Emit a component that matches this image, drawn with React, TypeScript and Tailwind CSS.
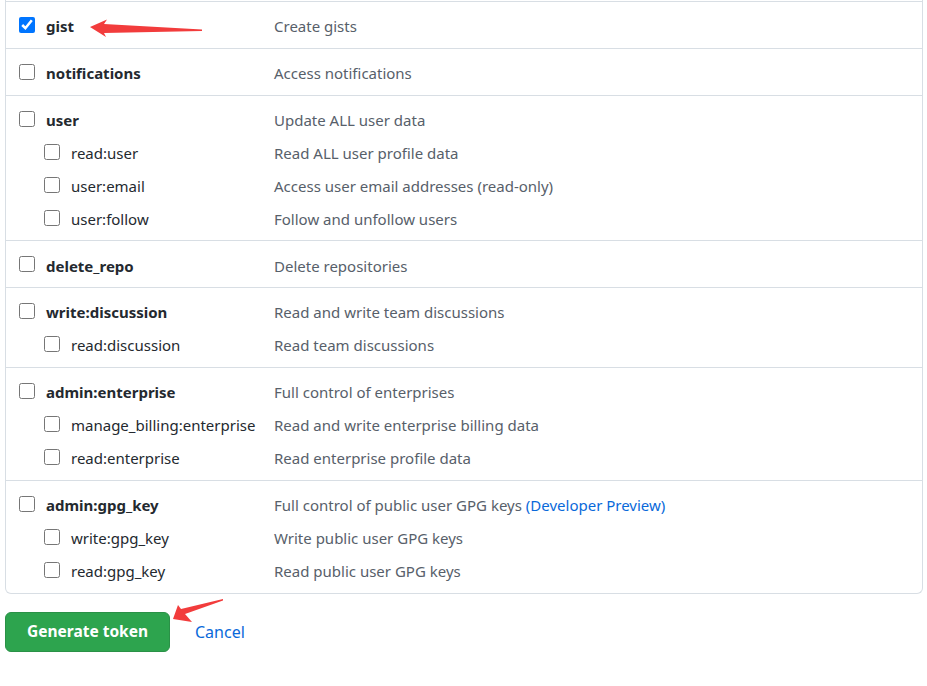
import React from "react";

interface Scope {
  name: string;
  desc: React.ReactNode;
  checked?: boolean;
}

interface ScopeGroup {
  main: Scope;
  subs?: Scope[];
}

const GROUPS: ScopeGroup[] = [
  { main: { name: "gist", desc: "Create gists", checked: true } },
  { main: { name: "notifications", desc: "Access notifications" } },
  {
    main: { name: "user", desc: "Update ALL user data" },
    subs: [
      { name: "read:user", desc: "Read ALL user profile data" },
      { name: "user:email", desc: "Access user email addresses (read-only)" },
      { name: "user:follow", desc: "Follow and unfollow users" },
    ],
  },
  { main: { name: "delete_repo", desc: "Delete repositories" } },
  {
    main: { name: "write:discussion", desc: "Read and write team discussions" },
    subs: [{ name: "read:discussion", desc: "Read team discussions" }],
  },
  {
    main: { name: "admin:enterprise", desc: "Full control of enterprises" },
    subs: [
      { name: "manage_billing:enterprise", desc: "Read and write enterprise billing data" },
      { name: "read:enterprise", desc: "Read enterprise profile data" },
    ],
  },
  {
    main: {
      name: "admin:gpg_key",
      desc: (
        <>
          Full control of public user GPG keys{" "}
          <a href="#" className="text-[#0969da]">
            (Developer Preview)
          </a>
        </>
      ),
    },
    subs: [
      { name: "write:gpg_key", desc: "Write public user GPG keys" },
      { name: "read:gpg_key", desc: "Read public user GPG keys" },
    ],
  },
];

function ScopeRow({ scope, sub }: { scope: Scope; sub?: boolean }) {
  return (
    <label className="flex h-[33px] items-center">
      <div className={`flex w-[255px] shrink-0 items-center ${sub ? "pl-[25px]" : ""}`}>
        <input
          type="checkbox"
          defaultChecked={scope.checked}
          className="m-0 mb-[3px] h-4 w-4 shrink-0"
        />
        <span
          className={`ml-[11px] whitespace-nowrap text-[#24292f] ${
            sub ? "font-normal" : "font-bold"
          }`}
        >
          {scope.name}
        </span>
      </div>
      <span className="whitespace-nowrap text-[#57606a]">{scope.desc}</span>
    </label>
  );
}

export default function App() {
  return (
    <div
      className="relative min-h-[686px] w-[927px] bg-white text-[15px]"
      style={{ fontFamily: '"Noto Sans", "Open Sans", sans-serif' }}
    >
      <div className="pl-[5px] pr-[4px]">
        <div className="rounded-b-md border-x border-b border-[#d8dee4]">
          <div className="h-px" />
          {GROUPS.map((g) => (
            <div key={g.main.name} className="border-t border-[#d8dee4] pb-[4.8px] pl-[13px] pt-2">
              <ScopeRow scope={g.main} />
              {g.subs?.map((s) => <ScopeRow key={s.name} scope={s} sub />)}
            </div>
          ))}
        </div>

        <div className="mt-[18px] flex items-center">
          <button className="h-10 w-[165px] rounded-md border border-[#2a9147] bg-[#2da44e] text-[15.5px] font-bold text-white">
            Generate token
          </button>
          <a href="#" className="ml-[25px] text-[16px] text-[#0969da]">
            Cancel
          </a>
        </div>
      </div>

      {/* annotation arrows */}
      <svg className="pointer-events-none absolute left-0 top-0" width="927" height="686">
        <path d="M90,27 L107,19.5 L104,24 L202,29.5 L202,31 L104,33 L106,37 Z" fill="#f23c3c" />
        <path d="M173,619 L178,605 L181,609 L223,599 L223,600.5 L185,614 L192,622 Z" fill="#f23c3c" />
      </svg>
    </div>
  );
}
